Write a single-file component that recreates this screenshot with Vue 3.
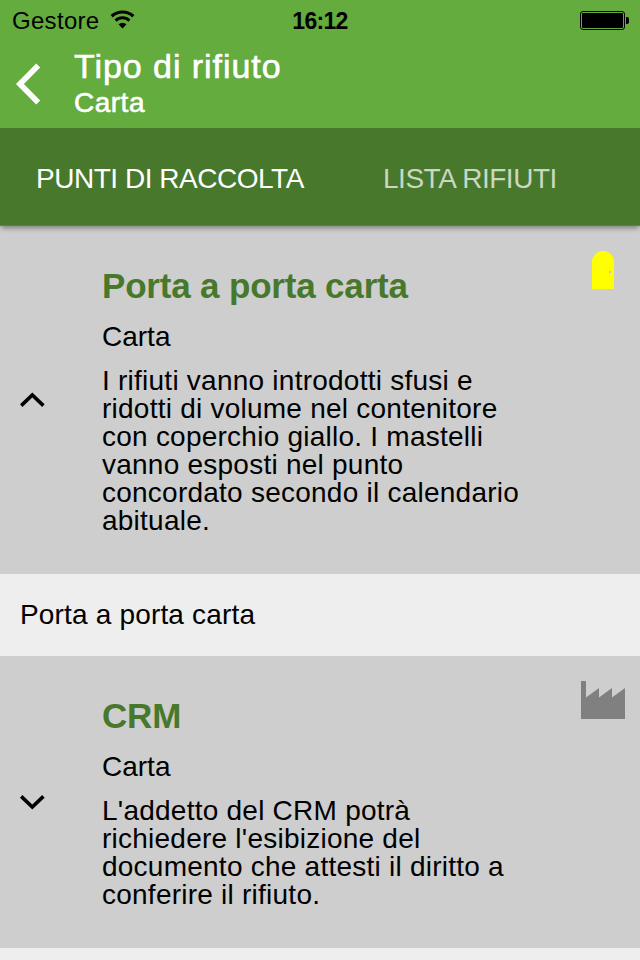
<script setup>
const cards = [
  {
    title: 'Porta a porta carta',
    type: 'Carta',
    icon: 'door',
    open: true,
    lines: [
      'I rifiuti vanno introdotti sfusi e',
      'ridotti di volume nel contenitore',
      'con coperchio giallo. I mastelli',
      'vanno esposti nel punto',
      'concordato secondo il calendario',
      'abituale.',
    ],
    detail: 'Porta a porta carta',
  },
  {
    title: 'CRM',
    type: 'Carta',
    icon: 'factory',
    open: false,
    lines: [
      "L'addetto del CRM potrà",
      "richiedere l'esibizione del",
      'documento che attesti il diritto a',
      'conferire il rifiuto.',
    ],
    detail: '',
  },
]
</script>

<template>
  <div class="screen">
    <header class="top">
      <div class="status">
        <div class="carrier">
          <span>Gestore</span>
          <svg class="wifi" width="26" height="20" viewBox="0 0 26 20">
            <path d="M1.7 6.2A16 16 0 0 1 23.3 6.2" fill="none" stroke="#000" stroke-width="3.2" />
            <path d="M5.6 10.6A10 10 0 0 1 19.4 10.6" fill="none" stroke="#000" stroke-width="3" />
            <path d="M8.5 14.3A6 6 0 0 1 16.5 14.3L12.5 18.6Z" />
          </svg>
        </div>
        <span class="clock">16:12</span>
        <svg class="battery" width="50" height="20" viewBox="0 0 50 20">
          <rect x="0.5" y="0.5" width="44" height="18" rx="2.5" fill="none" stroke="#000" />
          <rect x="2" y="2" width="41" height="15" rx="1" />
          <path d="M46 6h1a2 2 0 0 1 2 2v3a2 2 0 0 1-2 2h-1z" />
        </svg>
      </div>
      <div class="heading">
        <svg class="back" width="28" height="44" viewBox="0 0 28 44">
          <path d="M24.2 3.5L5.9 22L24.2 40.5" fill="none" stroke="#fff" stroke-width="5.6" />
        </svg>
        <div class="names">
          <h1>Tipo di rifiuto</h1>
          <p>Carta</p>
        </div>
      </div>
    </header>
    <nav class="tabs">
      <span class="tab active">PUNTI DI RACCOLTA</span>
      <span class="tab">LISTA RIFIUTI</span>
    </nav>
    <main>
      <template v-for="card in cards" :key="card.title">
        <section class="card">
          <div class="toggle">
            <svg width="26" height="16" viewBox="0 0 26 16">
              <path v-if="card.open" d="M1.2 13.6L12.3 3L23.4 13.6" fill="none" stroke="#000" stroke-width="3.6" />
              <path v-else d="M1.2 2.4L12.3 13L23.4 2.4" fill="none" stroke="#000" stroke-width="3.6" />
            </svg>
          </div>
          <div class="info">
            <h2>{{ card.title }}</h2>
            <p class="type">{{ card.type }}</p>
            <p class="text">
              <span v-for="line in card.lines" :key="line">{{ line }}</span>
            </p>
          </div>
          <div class="kind">
            <svg v-if="card.icon === 'door'" class="door" width="22" height="38" viewBox="0 0 22 38">
              <path d="M0 38V11A11 11 0 0 1 22 11V38Z" fill="#ff0" />
              <rect x="17" y="20" width="2" height="2" fill="#c4c4c4" />
            </svg>
            <svg v-else width="44" height="38" viewBox="0 0 44 38">
              <path d="M0 38V0H5V16.5L18 7V16.5L31 7V16.5L44 7V38Z" fill="#808080" />
            </svg>
          </div>
        </section>
        <div class="detail">{{ card.detail }}</div>
      </template>
    </main>
  </div>
</template>

<style>
body {
  margin: 0;
}
</style>

<style scoped>
.screen {
  width: 640px;
  height: 960px;
  overflow: hidden;
  background: #eee;
  color: #000;
  font-family: "Liberation Sans", Arial, sans-serif;
  font-size: 28px;
  line-height: 28px;
  white-space: nowrap;
}
h1,
h2,
p {
  margin: 0;
}
svg {
  display: block;
}
.top {
  position: relative;
  z-index: 2;
  height: 128px;
  background: #64ac3e;
}
.status {
  display: grid;
  grid-template-columns: 1fr auto 1fr;
  height: 40px;
  padding: 0 10px 0 12px;
  font-size: 24px;
  line-height: 42px;
}
.carrier {
  display: flex;
  letter-spacing: 0.3px;
}
.wifi {
  margin: 10px 0 0 11px;
}
.clock {
  margin-right: 2px;
  font-size: 23px;
  font-weight: 700;
  letter-spacing: -0.7px;
}
.battery {
  justify-self: end;
  margin-top: 11px;
}
.heading {
  display: flex;
  height: 88px;
  padding-left: 14px;
  color: #fff;
}
.back {
  margin-top: 22px;
}
.names {
  padding: 6px 0 0 32px;
}
.names h1 {
  font-size: 34px;
  font-weight: 400;
  line-height: 40px;
  letter-spacing: 0.95px;
  -webkit-text-stroke: 0.6px #fff;
}
.names p {
  padding-top: 3px;
  letter-spacing: 0.5px;
  -webkit-text-stroke: 0.6px #fff;
}
.tabs {
  position: relative;
  z-index: 1;
  box-sizing: border-box;
  display: flex;
  height: 98px;
  padding: 37px 0 0 36px;
  border-bottom: 1px solid #36934f;
  background: #47782b;
  box-shadow: 0 3px 5px -1px rgba(0, 0, 0, 0.4);
  color: #cad7c3;
  letter-spacing: -0.47px;
}
.tab {
  flex: none;
  width: 347px;
}
.active {
  color: #fff;
}
.card {
  display: flex;
  background: #cecece;
}
.toggle {
  display: flex;
  align-items: center;
  width: 82px;
  padding-left: 20px;
}
.info {
  flex: 1;
  padding: 40px 0 39px;
}
.info h2 {
  color: #47782b;
  font-size: 35px;
  font-weight: 700;
  line-height: 40px;
  letter-spacing: -0.18px;
}
.type {
  padding: 17px 0 16px;
}
.text span {
  display: block;
  letter-spacing: 0.24px;
}
.kind {
  display: flex;
  justify-content: flex-end;
  align-self: flex-start;
  padding: 25px 15px 0 0;
}
.door {
  margin-right: 11px;
}
.detail {
  height: 82px;
  padding-left: 20px;
  line-height: 82px;
  letter-spacing: 0.17px;
}
</style>
